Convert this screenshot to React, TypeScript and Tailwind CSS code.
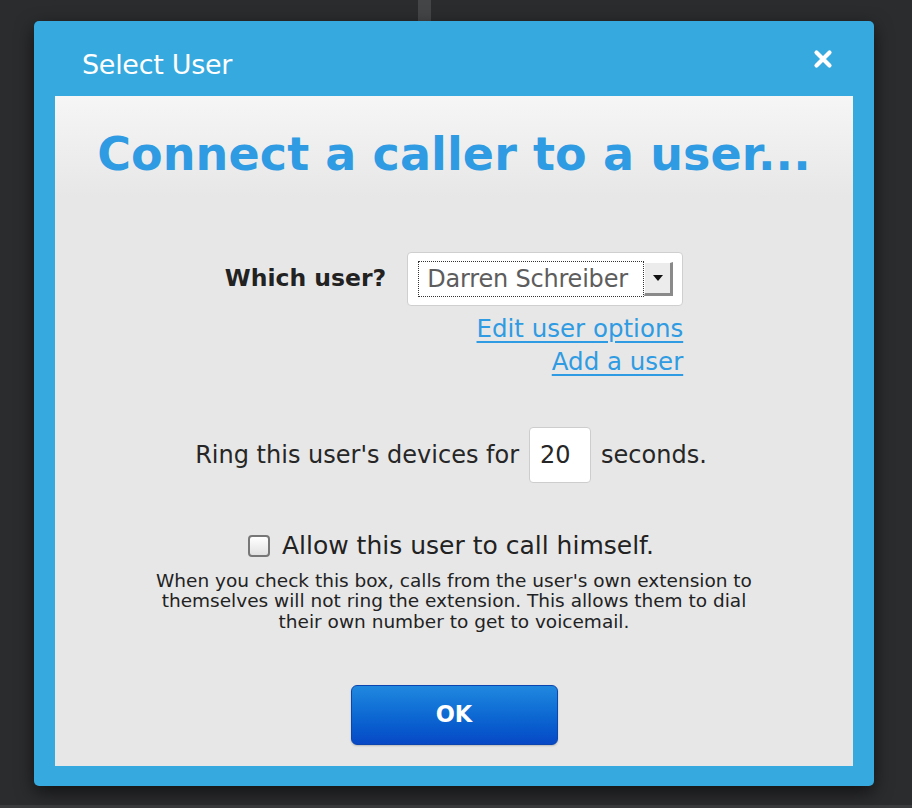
import React from "react";

export default function App() {
  const font = { fontFamily: '"DejaVu Sans", Verdana, sans-serif' };
  return (
    <div className="w-[912px] h-[808px] bg-[#2b2c2e] relative overflow-hidden" style={font}>
      <div className="absolute left-[418px] top-0 w-[13px] h-[22px] bg-[#444547]" />
      <div className="absolute left-0 bottom-0 w-full h-[3px] bg-[#3a3b3d]" />
      <div className="absolute left-[34px] top-[21px] w-[840px] h-[765px] bg-[#36a9de] rounded-[5px] shadow-[0_6px_18px_rgba(0,0,0,0.6)] flex flex-col">
        <div className="h-[75px] flex items-center justify-between pl-[48px] pr-[40px] shrink-0">
          <span className="text-white text-[27px] pt-[14px] tracking-[-0.3px]">Select User</span>
          <svg width="20" height="20" viewBox="0 0 20 20" className="mt-[1px] mr-[1px]">
            <path d="M3.5 3.5 L16.5 16.5 M16.5 3.5 L3.5 16.5" stroke="white" strokeWidth="4.2" strokeLinecap="round" />
          </svg>
        </div>
        <div className="mx-[21px] mb-[20px] flex-1 bg-gradient-to-b from-[#f6f6f6] to-[#e7e7e7] from-[0%] to-[15%] flex flex-col items-center">
          <h1 className="text-[#2f9be2] font-bold text-[46px] mt-[28px] leading-[60px] tracking-[0.1px]">Connect a caller to a user...</h1>

          <div className="flex flex-col items-end mt-[68px]">
            <div className="flex items-center">
              <span className="text-[#222] font-bold text-[23.5px] mr-[21px]">Which user?</span>
              <div className="w-[276px] h-[54px] bg-white border border-[#cfcfcf] rounded-[4px] flex items-center pl-[10px] pr-[9px]">
                <div className="flex-1 h-[36px] border border-dotted border-[#333] flex items-center pl-[8px] text-[24px] tracking-[-0.2px] text-[#5d5d5d]">Darren Schreiber</div>
                <div className="w-[29px] h-[34px] bg-[#ececec] border-r-[3px] border-b-[3px] border-[#8a8a8a] border-l border-t border-l-white border-t-white flex items-center justify-center">
                  <svg width="10" height="6" viewBox="0 0 10 6"><path d="M0 0 H10 L5 6 Z" fill="#111" /></svg>
                </div>
              </div>
            </div>
            <a className="text-[#2f9be2] underline underline-offset-[4px] text-[24.5px] leading-[33px] mt-[6px]" href="#">Edit user options</a>
            <a className="text-[#2f9be2] underline underline-offset-[4px] text-[24.5px] leading-[33px]" href="#">Add a user</a>
          </div>

          <div className="flex items-center mt-[49px] text-[24px] text-[#262626] mr-[6px]">
            <span>Ring this user's devices for</span>
            <div className="w-[62px] h-[56px] bg-white border border-[#cdcdcd] rounded-[4px] mx-[10px] flex items-center pl-[10px] text-[24px]">20</div>
            <span>seconds.</span>
          </div>

          <div className="flex items-center mt-[44px] mr-[6px]">
            <div className="w-[22px] h-[22px] rounded-[4px] border-2 border-[#777] bg-gradient-to-b from-white to-[#e2e2e2] mr-[12px]" />
            <span className="text-[25px] text-[#222]">Allow this user to call himself.</span>
          </div>
          <p className="text-[18.5px] leading-[20.5px] text-[#222] text-center mt-[6px]">
            When you check this box, calls from the user's own extension to<br />
            themselves will not ring the extension. This allows them to dial<br />
            their own number to get to voicemail.
          </p>

          <button className="mt-[53px] w-[207px] h-[60px] rounded-[6px] bg-gradient-to-b from-[#2088df] to-[#0848c6] border border-[#0a45b0] text-white font-bold text-[22.5px] shadow-[0_1px_2px_rgba(0,0,0,0.2)]">OK</button>
        </div>
      </div>
    </div>
  );
}
